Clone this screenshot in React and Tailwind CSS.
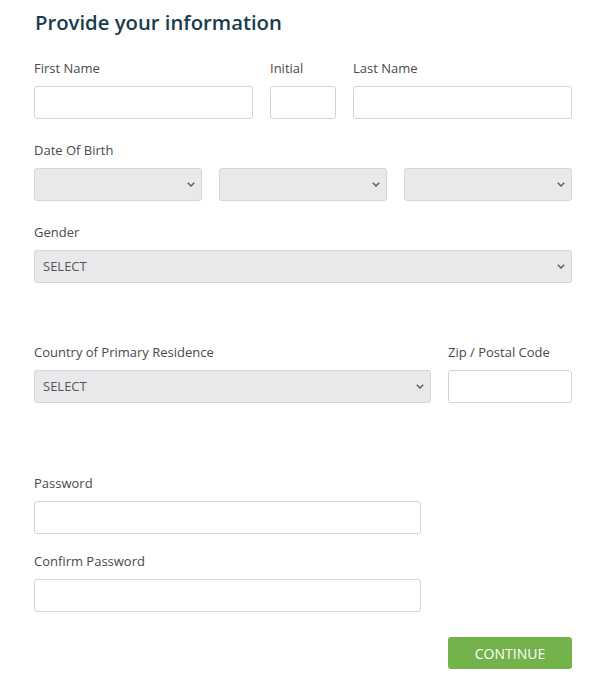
import { useState } from 'react';

function Label({ children }) {
    return (
        <label className="block text-[13px] leading-[18px] text-[#4a4a4a] mb-[9px]">
            {children}
        </label>
    );
}

function TextInput({ type = "text", className = "" }) {
    return (
        <input
            type={type}
            className={`block h-[33px] w-full rounded-[3px] border border-[#d3d3d3] bg-white px-2 text-[13px] outline-none ${className}`}
        />
    );
}

function Chevron() {
    return (
        <svg width="8" height="5" viewBox="0 0 8 5" fill="none" className="shrink-0">
            <path d="M0.8 0.8 L4 4 L7.2 0.8" stroke="#555" strokeWidth="1.3" />
        </svg>
    );
}

function Select({ placeholder = "", value, onChange, options = [] }) {
    return (
        <div className="flex h-[33px] w-full items-center rounded-[3px] border border-[#d5d5d9] bg-[#e9e9ec] pr-[6px]">
            <select
                value={value}
                onChange={(e) => onChange(e.target.value)}
                className="h-full min-w-0 flex-1 appearance-none bg-transparent pl-[8px] text-[13px] text-[#555] outline-none"
            >
                <option value="">{placeholder}</option>
                {options.map((o) => (
                    <option key={o} value={o}>{o}</option>
                ))}
            </select>
            <Chevron />
        </div>
    );
}

export default function App() {
    const [month, setMonth] = useState("");
    const [day, setDay] = useState("");
    const [year, setYear] = useState("");
    const [gender, setGender] = useState("");
    const [country, setCountry] = useState("");

    return (
        <div className="min-h-screen w-[600px] bg-white pl-[34px] pr-[28px] pt-[8px] font-['Open_Sans',sans-serif]">
            <h1 className="text-[20.3px] font-semibold leading-[28px] text-[#193c4c] pl-px">
                Provide your information
            </h1>

            <form onSubmit={(e) => e.preventDefault()}>
                <div className="mt-[23px] grid grid-cols-[219px_66px_219px] gap-x-[17px]">
                    <div>
                        <Label>First Name</Label>
                        <TextInput />
                    </div>
                    <div>
                        <Label>Initial</Label>
                        <TextInput />
                    </div>
                    <div>
                        <Label>Last Name</Label>
                        <TextInput />
                    </div>
                </div>

                <div className="mt-[22px]">
                    <Label>Date Of Birth</Label>
                    <div className="grid grid-cols-3 gap-x-[17px]">
                        <Select value={month} onChange={setMonth} options={["January", "February", "March"]} />
                        <Select value={day} onChange={setDay} options={["1", "2", "3"]} />
                        <Select value={year} onChange={setYear} options={["2000", "2001", "2002"]} />
                    </div>
                </div>

                <div className="mt-[22px]">
                    <Label>Gender</Label>
                    <Select placeholder="SELECT" value={gender} onChange={setGender} options={["Male", "Female", "Other"]} />
                </div>

                <div className="mt-[60px] grid grid-cols-[397px_124px] gap-x-[17px]">
                    <div>
                        <Label>Country of Primary Residence</Label>
                        <Select placeholder="SELECT" value={country} onChange={setCountry} options={["United States", "Canada"]} />
                    </div>
                    <div>
                        <Label>Zip / Postal Code</Label>
                        <TextInput />
                    </div>
                </div>

                <div className="mt-[71px] w-[387px]">
                    <Label>Password</Label>
                    <TextInput type="password" />
                </div>

                <div className="mt-[18px] w-[387px]">
                    <Label>Confirm Password</Label>
                    <TextInput type="password" />
                </div>

                <div className="mt-[25px] flex justify-end">
                    <button
                        type="submit"
                        className="h-[32px] w-[124px] rounded-[3px] bg-[#74b24c] text-[14px] text-white"
                    >
                        CONTINUE
                    </button>
                </div>
            </form>
        </div>
    );
}
